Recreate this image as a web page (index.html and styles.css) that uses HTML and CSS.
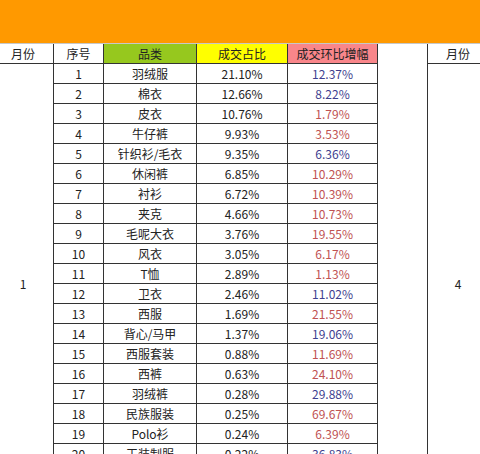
FILE: index.html
```html
<!DOCTYPE html>
<html lang="zh">
<head>
<meta charset="utf-8">
<title>成交占比</title>
<link rel="stylesheet" href="styles.css">
</head>
<body>
<div class="banner"></div>
<div class="sheet">
  <div class="c month-h">月份</div>
  <div class="c month-b">1</div>
  <div class="c gap"></div>
  <div class="c month2-b">4</div>

  <div class="c">序号</div>
  <div class="c h-green">品类</div>
  <div class="c h-yellow">成交占比</div>
  <div class="c h-pink">成交环比增幅</div>
  <div class="c month2-h">月份</div>

  <div class="c">1</div><div class="c">羽绒服</div><div class="c">21.10%</div><div class="c up">12.37%</div>
  <div class="c">2</div><div class="c">棉衣</div><div class="c">12.66%</div><div class="c up">8.22%</div>
  <div class="c">3</div><div class="c">皮衣</div><div class="c">10.76%</div><div class="c dn">1.79%</div>
  <div class="c">4</div><div class="c">牛仔裤</div><div class="c">9.93%</div><div class="c dn">3.53%</div>
  <div class="c">5</div><div class="c">针织衫/毛衣</div><div class="c">9.35%</div><div class="c up">6.36%</div>
  <div class="c">6</div><div class="c">休闲裤</div><div class="c">6.85%</div><div class="c dn">10.29%</div>
  <div class="c">7</div><div class="c">衬衫</div><div class="c">6.72%</div><div class="c dn">10.39%</div>
  <div class="c">8</div><div class="c">夹克</div><div class="c">4.66%</div><div class="c dn">10.73%</div>
  <div class="c">9</div><div class="c">毛呢大衣</div><div class="c">3.76%</div><div class="c dn">19.55%</div>
  <div class="c">10</div><div class="c">风衣</div><div class="c">3.05%</div><div class="c dn">6.17%</div>
  <div class="c">11</div><div class="c">T恤</div><div class="c">2.89%</div><div class="c dn">1.13%</div>
  <div class="c">12</div><div class="c">卫衣</div><div class="c">2.46%</div><div class="c up">11.02%</div>
  <div class="c">13</div><div class="c">西服</div><div class="c">1.69%</div><div class="c dn">21.55%</div>
  <div class="c">14</div><div class="c">背心/马甲</div><div class="c">1.37%</div><div class="c up">19.06%</div>
  <div class="c">15</div><div class="c">西服套装</div><div class="c">0.88%</div><div class="c dn">11.69%</div>
  <div class="c">16</div><div class="c">西裤</div><div class="c">0.63%</div><div class="c dn">24.10%</div>
  <div class="c">17</div><div class="c">羽绒裤</div><div class="c">0.28%</div><div class="c up">29.88%</div>
  <div class="c">18</div><div class="c">民族服装</div><div class="c">0.25%</div><div class="c dn">69.67%</div>
  <div class="c">19</div><div class="c">Polo衫</div><div class="c">0.24%</div><div class="c dn">6.39%</div>
  <div class="c">20</div><div class="c">工装制服</div><div class="c">0.22%</div><div class="c up">36.83%</div>
</div>
</body>
</html>
```
FILE: styles.css
```css
html, body {
  margin: 0;
  padding: 0;
  background: #fff;
}
body {
  width: 480px;
  height: 454px;
  overflow: hidden;
  font-family: "Noto Sans CJK SC", "Microsoft YaHei", sans-serif;
  font-size: 12px;
  color: #222;
}
.banner {
  height: 43px;
  background: #ff9900;
  border-bottom: 1px solid #c8c8c8;
}
.sheet {
  display: grid;
  grid-template-columns: 61px 50px 93px 91px 90px 50px 60px;
  grid-auto-rows: 20px;
  margin-left: -7px;
}
.c {
  box-sizing: border-box;
  border-right: 1px solid #333;
  border-bottom: 1px solid #333;
  display: flex;
  align-items: center;
  justify-content: center;
  line-height: 1;
  white-space: nowrap;
}
.month-h { grid-column: 1; grid-row: 1; }
.month-b { grid-column: 1; grid-row: 2 / span 22; }
.gap { grid-column: 6; grid-row: 1 / span 23; }
.month2-b { grid-column: 7; grid-row: 2 / span 22; border-right: none; }
.month2-h { border-right: none; }
.h-green { background: #96c81e; }
.h-yellow { background: #ffff00; }
.h-pink { background: #f9868a; }
.up { color: #3f3f8f; }
.dn { color: #c05252; }
```
